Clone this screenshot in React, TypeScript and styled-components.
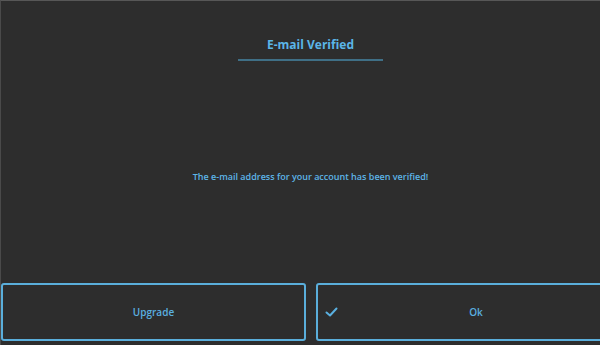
import React from "react";
import styled, { createGlobalStyle } from "styled-components";

const Global = createGlobalStyle`
  html, body { margin: 0; padding: 0; background: #2d2d2d; }
  * { box-sizing: border-box; }
`;

const Screen = styled.div`
  width: 600px;
  height: 345px;
  overflow: hidden;
  background: #2d2d2d;
  border-top: 1px solid #575757;
  border-left: 1px solid #4a4a4a;
  display: flex;
  flex-direction: column;
  font-family: "Open Sans", "Noto Sans", sans-serif;
  color: #5ab3e6;
`;

const Header = styled.div`
  display: flex;
  flex-direction: column;
  align-items: center;
  padding-top: 35px;
  padding-left: 20px;
`;

const Title = styled.h1`
  margin: 0;
  font-size: 12px;
  font-weight: 700;
  line-height: 18px;
  color: #5bb5e8;
`;

const Rule = styled.div`
  width: 145px;
  height: 2px;
  margin-top: 5px;
  background: #3f6f86;
`;

const Body = styled.div`
  flex: 1;
  display: flex;
  align-items: center;
  justify-content: center;
  padding-left: 20px;
  padding-top: 8px;
`;

const Message = styled.p`
  margin: 0;
  font-size: 9px;
  font-weight: 600;
  color: #5db5e8;
`;

const Actions = styled.div`
  display: flex;
  gap: 10px;
  padding: 0 0 4px 0;
`;

const Button = styled.button<{ $width: number }>`
  position: relative;
  flex: 0 0 ${(p) => p.$width}px;
  height: 58px;
  background: transparent;
  border: 2px solid #5aaedb;
  border-radius: 3px;
  color: #5ab0e0;
  font-family: "Open Sans", "Noto Sans", sans-serif;
  font-size: 10px;
  font-weight: 600;
  display: flex;
  align-items: center;
  justify-content: center;
  padding: 0;
`;

const Check = styled.svg`
  position: absolute;
  left: 7px;
  top: 50%;
  margin-top: -6px;
  width: 13px;
  height: 12px;
`;

export default function App() {
  return (
    <>
      <Global />
      <Screen>
        <Header>
          <Title>E-mail Verified</Title>
          <Rule />
        </Header>
        <Body>
          <Message>The e-mail address for your account has been verified!</Message>
        </Body>
        <Actions>
          <Button $width={305}>Upgrade</Button>
          <Button $width={320}>
            <Check viewBox="0 0 13 12">
              <path d="M1.5 6.5 L5 9.5 L11.5 2.5" fill="none" stroke="#5ab0e0" strokeWidth="2" strokeLinecap="round" strokeLinejoin="round" />
            </Check>
            Ok
          </Button>
        </Actions>
      </Screen>
    </>
  );
}
